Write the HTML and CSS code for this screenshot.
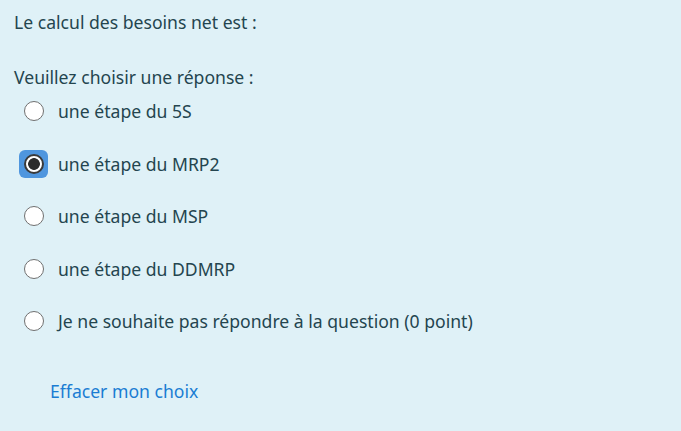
FILE: index.html
```html
<!DOCTYPE html>
<html lang="fr">
<head>
<meta charset="utf-8">
<link rel="stylesheet" href="styles.css">
</head>
<body>
<div class="formulation">
  <p class="qtext">Le calcul des besoins net est :</p>
  <p class="prompt">Veuillez choisir une réponse :</p>
  <div class="answers">
    <label class="opt"><span class="rwrap"><span class="radio"></span></span><span>une étape du 5S</span></label>
    <label class="opt"><span class="rwrap focus"><span class="radio checked"></span></span><span>une étape du MRP2</span></label>
    <label class="opt"><span class="rwrap"><span class="radio"></span></span><span>une étape du MSP</span></label>
    <label class="opt"><span class="rwrap"><span class="radio"></span></span><span>une étape du DDMRP</span></label>
    <label class="opt"><span class="rwrap"><span class="radio"></span></span><span>Je ne souhaite pas répondre à la question (0 point)</span></label>
  </div>
  <a class="clear" href="#">Effacer mon choix</a>
</div>
</body>
</html>
```
FILE: styles.css
```css
html, body {
  margin: 0;
  padding: 0;
  background: #dff1f7;
}
.formulation {
  width: 681px;
  height: 431px;
  box-sizing: border-box;
  padding: 10px 14px;
  font-family: "Noto Sans", "Open Sans", sans-serif;
  font-size: 17.6px;
  line-height: 24px;
  color: #24454f;
}
.qtext {
  margin: 0;
}
.prompt {
  margin: 31px 0 0;
}
.answers {
  display: flex;
  flex-direction: column;
  margin-top: -4px;
  padding-left: 5px;
}
.opt {
  display: flex;
  align-items: center;
  gap: 10px;
  height: 52.5px;
}
.rwrap {
  width: 29px;
  height: 28px;
  border-radius: 6px;
  display: flex;
  align-items: center;
  justify-content: center;
  flex: none;
}
.rwrap.focus {
  background: #4f96de;
}
.radio {
  width: 20px;
  height: 20px;
  border: 1.5px solid #707070;
  border-radius: 50%;
  background: #fff;
  box-sizing: border-box;
}
.radio.checked {
  border: 2px solid #3a3a3a;
  background: radial-gradient(circle, #2c2c2c 0 5.5px, #fff 6.2px);
}
.clear {
  display: inline-block;
  margin: 31px 0 0 36px;
  color: #1a7dd3;
  text-decoration: none;
}
```
